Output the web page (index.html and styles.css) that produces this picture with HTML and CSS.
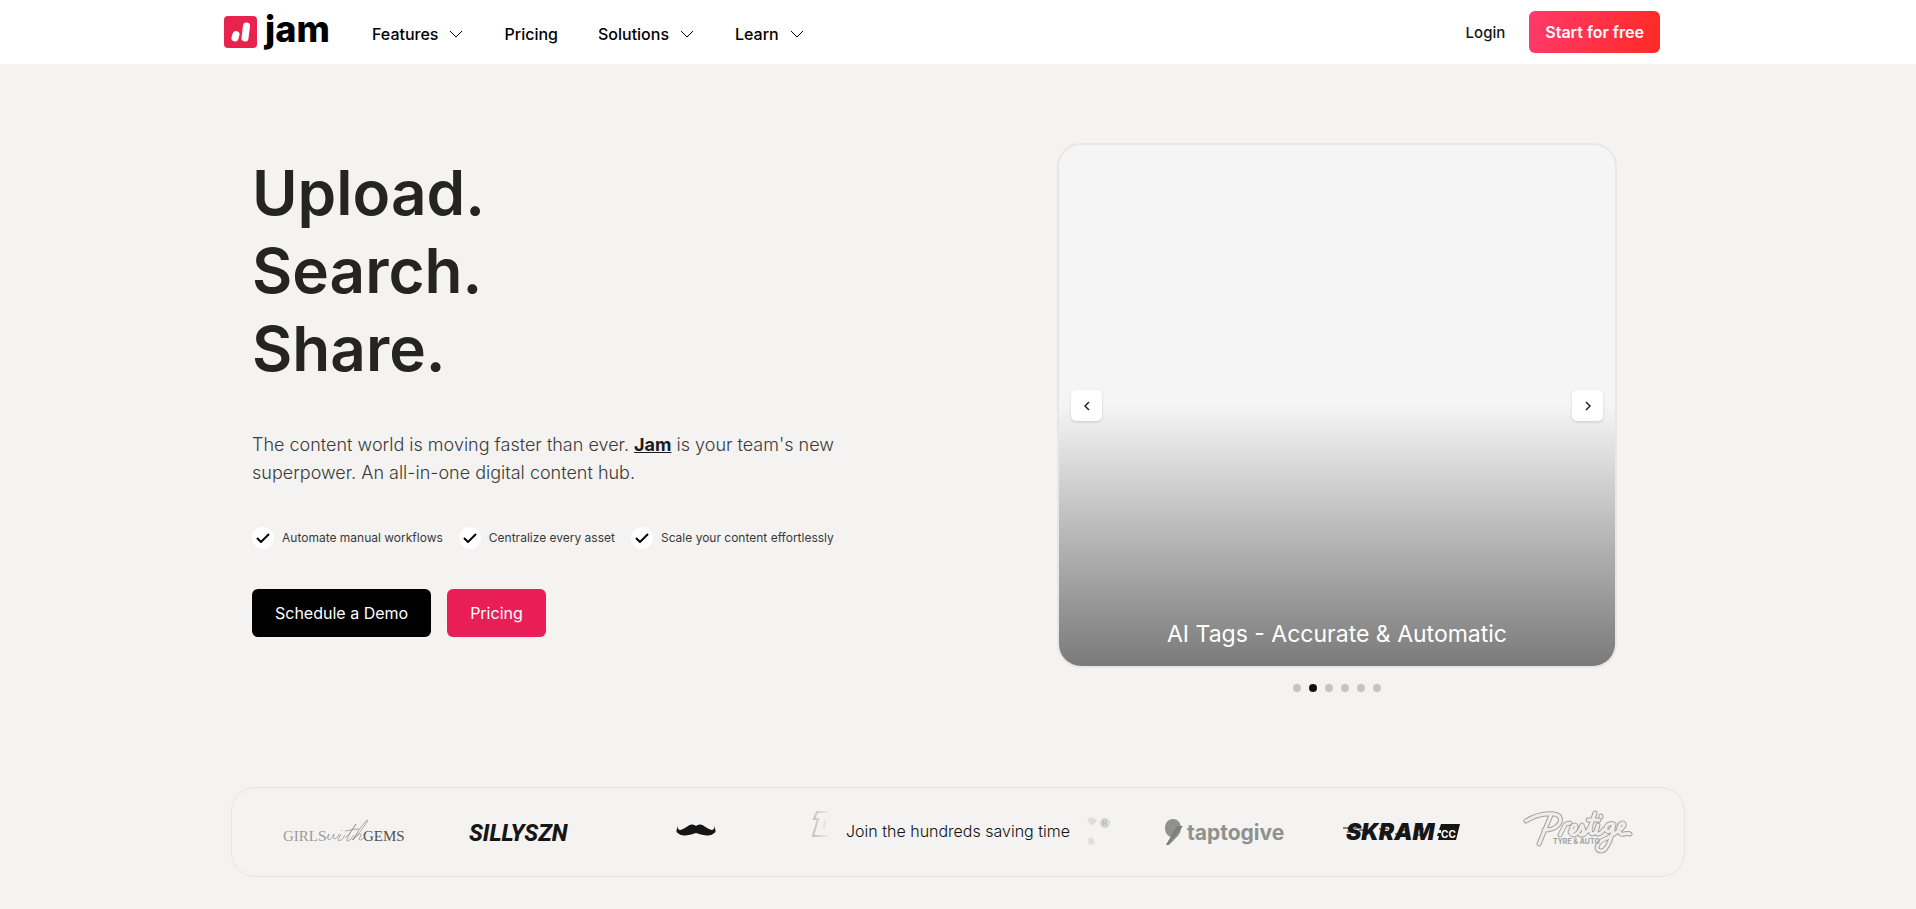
FILE: index.html
```html
<!DOCTYPE html>
<html lang="en">
<head>
    <meta charset="UTF-8">
    <meta name="viewport" content="width=device-width, initial-scale=1.0">
    <title>Jam - Upload. Search. Share.</title>
    <link rel="stylesheet" href="styles.css">
</head>
<body>
    <header class="site-header">
        <div class="header-inner">
            <a class="brand" href="#" aria-label="Jam home">
                <svg width="33" height="32" viewBox="0 0 33 32">
                    <rect width="33" height="32" rx="4" fill="#e8234d"/>
                    <path d="M12 18.500l-1 3.500M22.500 10l-1.500 12" stroke="#fff" stroke-width="7" stroke-linecap="round"/>
                </svg>
                <span class="brand-name">jam</span>
            </a>
            <nav class="main-nav">
                <button class="nav-item" type="button">Features
                    <svg class="chevron" viewBox="0 0 14 8"><path d="M1 1l6 6 6-6"/></svg>
                </button>
                <a class="nav-item" href="#">Pricing</a>
                <button class="nav-item" type="button">Solutions
                    <svg class="chevron" viewBox="0 0 14 8"><path d="M1 1l6 6 6-6"/></svg>
                </button>
                <button class="nav-item" type="button">Learn
                    <svg class="chevron" viewBox="0 0 14 8"><path d="M1 1l6 6 6-6"/></svg>
                </button>
            </nav>
            <div class="header-actions">
                <a class="login" href="#">Login</a>
                <button class="btn-start" type="button">Start for free</button>
            </div>
        </div>
    </header>

    <main>
        <section class="hero">
            <div class="hero-copy">
                <h1>Upload.<br>Search.<br>Share.</h1>
                <p class="lead">The content world is moving faster than ever. <a href="#">Jam</a> is your team's new superpower. An all-in-one digital content hub.</p>
                <ul class="benefits">
                    <li><span class="tick"><svg viewBox="0 0 14 10"><path d="M1 5l4 4 8-8"/></svg></span>Automate manual workflows</li>
                    <li><span class="tick"><svg viewBox="0 0 14 10"><path d="M1 5l4 4 8-8"/></svg></span>Centralize every asset</li>
                    <li><span class="tick"><svg viewBox="0 0 14 10"><path d="M1 5l4 4 8-8"/></svg></span>Scale your content effortlessly</li>
                </ul>
                <div class="hero-buttons">
                    <button class="btn btn-dark" type="button">Schedule a Demo</button>
                    <button class="btn btn-pink" type="button">Pricing</button>
                </div>
            </div>

            <div class="carousel">
                <div class="slide">
                    <div class="slide-controls">
                        <button class="arrow" type="button" aria-label="Previous"><svg viewBox="0 0 6 10"><path d="M5 1L1 5l4 4"/></svg></button>
                        <button class="arrow" type="button" aria-label="Next"><svg viewBox="0 0 6 10"><path d="M1 1l4 4-4 4"/></svg></button>
                    </div>
                    <p class="caption">AI Tags - Accurate &amp; Automatic</p>
                </div>
                <div class="dots">
                    <button class="dot" type="button" aria-label="Slide 1"></button>
                    <button class="dot active" type="button" aria-label="Slide 2"></button>
                    <button class="dot" type="button" aria-label="Slide 3"></button>
                    <button class="dot" type="button" aria-label="Slide 4"></button>
                    <button class="dot" type="button" aria-label="Slide 5"></button>
                    <button class="dot" type="button" aria-label="Slide 6"></button>
                </div>
            </div>
        </section>

        <section class="customers">
            <div class="logo-group">
                <!-- Girls with Gems -->
                <div class="logo">
                    <svg width="122" height="48" viewBox="0 0 122 48">
                        <g class="serif-logo">
                            <text x="0" y="33" fill="#9b9b9b">GIRLS</text>
                            <text x="80" y="33" fill="#505050">GEMS</text>
                        </g>
                        <path d="M41 32q3-1 5-6q-2 6 0 6q3-1 5-6q-1 5 1 5q4-2 4-5M58 26q-4 7-2 7q3 0 6-6M59 22v1M62 30q7-6 11-14q-8 11-9 16q-1 2 3 0l4-5M62 23q8-2 14-2M69 32q9-8 15-18q2-4-2 0q-7 8-12 18q6-7 8-6q1 1-2 5q0 3 6-2" fill="none" stroke="#8a8a8a" stroke-width=".7"/>
                    </svg>
                </div>
                <!-- Sillyszn -->
                <div class="logo">
                    <svg width="104" height="48" viewBox="0 0 104 48">
                        <text class="silly-logo" x="1" y="33">SILLYSZN</text>
                    </svg>
                </div>
                <!-- Moustache -->
                <div class="logo">
                    <svg width="40" height="48" viewBox="0 0 40 48">
                        <path d="M1.500 18q0 4 3 4q3-1 6-3q3-3 6-2.500q2 0 3.500 1.500q1.500-1.500 3.500-1.500q3-.5 6 2.500q3 2 6 3q3 0 3-4q1 4 1 6q-4 4-9 3.500q-6-1-10.500-2.500q-4.500 1.500-10.500 2.500q-5 .5-9-3.500q0-2 1-6z" fill="#161616"/>
                    </svg>
                </div>
                <svg class="logo-edge" width="18" height="48" viewBox="0 0 18 48">
                    <defs>
                        <linearGradient id="fade-out" gradientUnits="userSpaceOnUse" x1="0" x2="18"><stop offset="0" stop-color="#c0c0be"/><stop offset="1" stop-color="#c0c0be" stop-opacity="0"/></linearGradient>
                    </defs>
                    <path d="M18 4H5L2 11H6L1 28H18M13 12L12 21" fill="none" stroke="url(#fade-out)" stroke-width="2"/>
                </svg>
            </div>
            <p class="customers-title">Join the hundreds saving time</p>
            <div class="logo-group">
                <svg class="logo-edge" width="24" height="48" viewBox="0 0 24 48">
                    <path d="M1 11q6-4 10 2l-6 5zM2 31l4-2 3 7-6 1z" fill="#dededc"/>
                    <circle cx="19" cy="15" r="4.500" fill="#dededc" stroke="#d0d0ce" stroke-width="1"/>
                    <text class="mark" x="16" y="18">R</text>
                </svg>
                <!-- Taptogive -->
                <div class="logo">
                    <svg width="122" height="48" viewBox="0 0 122 48">
                        <path d="M8 11c5 0 8 4 8 9c0 5-3 8-6 11l-6 6H1l5-8c-4-1-6-5-6-9c0-5 3-9 8-9z" fill="#8f918e"/>
                        <path d="M12 18h6L3 37H1z" fill="#7c7e7b"/>
                        <text class="tap-logo" x="22" y="32">taptogive</text>
                    </svg>
                </div>
                <!-- Skram CC -->
                <div class="logo">
                    <svg width="118" height="48" viewBox="0 0 118 48">
                        <text class="skram-logo" x="3" y="32">SKRAM</text>
                        <path d="M0 20h14M4 24h8M16 22h9M36 21h9M38 27h6M52 26h10M56 22h8M72 21h9M73 27h7" stroke="#161616" stroke-width="1"/>
                        <path d="M98 16h19l-4 16H95l1-4h-2l1-3h3v-3h-2z" fill="#161616"/>
                        <text class="skram-cc" x="98" y="30">CC</text>
                    </svg>
                </div>
                <!-- Prestige -->
                <div class="logo">
                    <svg width="112" height="48" viewBox="0 0 112 48">
                        <path class="script-outline" d="M4 13C12 8 22 5 32 6c8 1 8 8 3 12c-3 3-8 4-13 4M29 7L17 36M38 27l5-10c1-2 3-1 5-2M48 24c5 0 8-6 5-7c-4 0-6 9-2 10c4 0 7-4 9-10c2 4 3 9-2 10M61 27c5-2 10-14 12-22c-3 8-7 19-3 21c3 0 5-4 6-9c-2 5-3 9 0 9c3 0 4-2 6-5M66 12h11M79 8v1M92 16c-5-2-9 2-8 6c2 4 6 0 8-6c-1 10-6 27-13 27c-7 0-4-9 4-12c7-3 11-6 14-9c4-1 7-6 4-7c-4 0-6 8-2 11c3 1 7-2 9 0"/>
                        <path class="script-fill" d="M4 13C12 8 22 5 32 6c8 1 8 8 3 12c-3 3-8 4-13 4M29 7L17 36M38 27l5-10c1-2 3-1 5-2M48 24c5 0 8-6 5-7c-4 0-6 9-2 10c4 0 7-4 9-10c2 4 3 9-2 10M61 27c5-2 10-14 12-22c-3 8-7 19-3 21c3 0 5-4 6-9c-2 5-3 9 0 9c3 0 4-2 6-5M66 12h11M79 8v1M92 16c-5-2-9 2-8 6c2 4 6 0 8-6c-1 10-6 27-13 27c-7 0-4-9 4-12c7-3 11-6 14-9c4-1 7-6 4-7c-4 0-6 8-2 11c3 1 7-2 9 0"/>
                        <text class="tyre" x="31" y="36">TYRE &amp; AUTO</text>
                    </svg>
                </div>
            </div>
        </section>
    </main>
</body>
</html>
```
FILE: styles.css
```css
* {
    box-sizing: border-box;
}
body {
    margin: 0;
    background: #f4f3f1;
    color: #242423;
    font-family: Inter, "Liberation Sans", sans-serif;
}
a {
    color: inherit;
    text-decoration: none;
}
button {
    font-family: inherit;
    border: none;
    margin: 0;
    padding: 0;
    cursor: pointer;
}

/* Header */
.site-header {
    background: #fff;
}
.header-inner {
    display: flex;
    align-items: center;
    max-width: 1468px;
    height: 64px;
    margin: 0 auto;
    padding-right: 32px;
}
.brand {
    display: flex;
    align-items: center;
    gap: 8px;
    width: 148px;
    color: #000;
}
.brand-name {
    padding-bottom: 6px;
    font-size: 36px;
    font-weight: 800;
    line-height: 40px;
}
.main-nav {
    display: flex;
    gap: 40px;
    padding-top: 3px;
}
.nav-item {
    display: flex;
    align-items: center;
    gap: 11px;
    background: none;
    color: #000;
    font-size: 16px;
    font-weight: 500;
    line-height: 20px;
}
.chevron {
    width: 14px;
    height: 8px;
    margin-right: 1px;
    fill: none;
    stroke: #000;
    stroke-width: 1;
}
.header-actions {
    display: flex;
    align-items: center;
    gap: 24px;
    margin-left: auto;
}
.login {
    font-size: 15px;
    font-weight: 500;
    color: #101820;
}
.btn-start {
    height: 42px;
    padding: 0 16px;
    border-radius: 6px;
    background: linear-gradient(100deg, #ff3a6b, #ff2a26);
    color: #fff;
    font-size: 16px;
    font-weight: 600;
}

/* Hero */
.hero {
    display: grid;
    grid-template-columns: 1fr 1fr;
    gap: 104px;
    max-width: 1454px;
    margin: 0 auto;
    padding: 81px 21px 95px;
}
.hero-copy {
    padding-top: 9px;
}
h1 {
    margin: 0;
    font-size: 62px;
    font-weight: 600;
    line-height: 78px;
}
.lead {
    max-width: 600px;
    margin: 43px 0 0;
    color: #3a3a39;
    font-size: 18px;
    font-weight: 300;
    line-height: 28px;
}
.lead a {
    color: #1c1c1b;
    font-weight: 700;
    text-decoration: underline;
}
.benefits {
    display: flex;
    gap: 16px;
    margin: 40px 0 0;
    padding: 0;
    list-style: none;
    color: #3a3a39;
    font-size: 12px;
    line-height: 22px;
}
.benefits li {
    display: flex;
    align-items: center;
    gap: 8px;
}
.tick {
    display: flex;
    align-items: center;
    justify-content: center;
    width: 22px;
    height: 22px;
    border-radius: 50%;
    background: #fff;
}
.tick svg {
    width: 14px;
    height: 10px;
    fill: none;
    stroke: #000;
    stroke-width: 2;
}
.hero-buttons {
    display: flex;
    gap: 16px;
    margin-top: 40px;
}
.btn {
    height: 48px;
    padding: 0 23px;
    border-radius: 6px;
    color: #fff;
    font-size: 16px;
}
.btn-dark {
    background: #000;
}
.btn-pink {
    background: #ea1e56;
}

/* Carousel */
.carousel {
    display: flex;
    flex-direction: column;
    align-items: center;
    gap: 18px;
}
.slide {
    display: flex;
    flex-direction: column;
    justify-content: flex-end;
    width: 100%;
    max-width: 556px;
    height: 521px;
    padding: 0 12px;
    border-radius: 22px;
    background: linear-gradient(#f5f5f5 50%, #7a7a7a);
    box-shadow: 0 0 0 2px #e8e7e5;
}
.slide-controls {
    display: flex;
    justify-content: space-between;
    margin-bottom: 197px;
}
.arrow {
    display: flex;
    align-items: center;
    justify-content: center;
    width: 31px;
    height: 31px;
    border-radius: 5px;
    background: #fff;
    box-shadow: 0 1px 3px rgba(0, 0, 0, 0.15);
}
.arrow svg {
    width: 6px;
    height: 10px;
    fill: none;
    stroke: #222;
    stroke-width: 1.5;
}
.caption {
    margin: 0 0 16px;
    color: #fff;
    font-size: 23px;
    line-height: 32px;
    text-align: center;
}
.dots {
    display: flex;
    gap: 8px;
}
.dot {
    width: 8px;
    height: 8px;
    border-radius: 50%;
    background: #c4c3c1;
}
.dot.active {
    background: #111;
}

/* Customers */
.customers {
    display: flex;
    align-items: center;
    justify-content: space-between;
    max-width: 1454px;
    height: 90px;
    margin: 0 auto;
    padding: 0 18px 0 24px;
    border: 1px solid #e6e5e3;
    border-radius: 24px;
}
.logo-group {
    display: flex;
    align-items: center;
    gap: 28px;
}
.logo {
    display: flex;
    justify-content: center;
    width: 148px;
}
.logo-group:first-child {
    padding-left: 14px;
}
.logo-group:last-child {
    padding-right: 14px;
}
.logo-edge {
    margin: 0 14px;
}
.customers-title {
    margin: 0;
    padding-bottom: 2px;
    font-size: 16px;
    font-weight: 300;
    color: #111;
}
.serif-logo {
    font-family: "Liberation Serif", serif;
    font-size: 15px;
}
.silly-logo {
    font-family: Roboto, sans-serif;
    font-size: 23px;
    font-style: italic;
    font-weight: 800;
    fill: #161616;
}
.mark {
    font-size: 8px;
    font-weight: 700;
    fill: #b8b8b6;
}
.tap-logo {
    font-size: 21px;
    font-weight: 700;
    fill: #8f918e;
}
.skram-logo {
    font-size: 23px;
    font-style: italic;
    font-weight: 900;
    fill: #161616;
}
.skram-cc {
    font-size: 10px;
    font-weight: 700;
    fill: #fff;
}
.script-outline,
.script-fill {
    fill: none;
    stroke: #a2a2a0;
    stroke-width: 5;
    stroke-linecap: round;
    stroke-linejoin: round;
}
.script-fill {
    stroke: #efeeec;
    stroke-width: 3;
}
.tyre {
    font-size: 7px;
    font-weight: 700;
    fill: #a2a2a0;
}
```
